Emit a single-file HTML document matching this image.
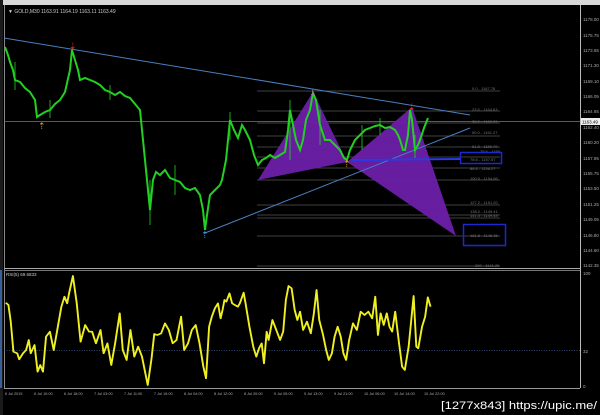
<!DOCTYPE html>
<html><head><meta charset="utf-8"><style>
html,body{margin:0;padding:0;background:#000;width:600px;height:415px;overflow:hidden}
svg{display:block}
text{font-family:"Liberation Sans",sans-serif}
</style></head><body>
<svg width="600" height="415" viewBox="0 0 600 415" xmlns="http://www.w3.org/2000/svg">
<rect width="600" height="415" fill="#000"/>
<rect x="0" y="0" width="600" height="5" fill="#d8d8d8"/>
<rect x="0" y="0" width="3" height="415" fill="#1a1a1a"/>
<rect x="0" y="270" width="2" height="118" fill="#3a5f9a"/>
<line x1="4.5" y1="5" x2="4.5" y2="388" stroke="#888" stroke-width="1"/>
<line x1="580.5" y1="5" x2="580.5" y2="388" stroke="#bbb" stroke-width="1"/>
<line x1="4" y1="268.5" x2="580" y2="268.5" stroke="#aaa" stroke-width="1"/>
<line x1="4" y1="270.5" x2="580" y2="270.5" stroke="#777" stroke-width="1"/>
<line x1="4" y1="388.5" x2="580" y2="388.5" stroke="#999" stroke-width="1"/>
<text x="8" y="13" fill="#ccc" font-size="5">▼ GOLD,M30  1163.91 1164.19 1163.11 1163.49</text>
<g stroke="#555" stroke-width="0.7">
<line x1="257" y1="91" x2="500" y2="91"/><line x1="257" y1="111" x2="500" y2="111"/>
<line x1="257" y1="123" x2="500" y2="123"/><line x1="257" y1="136" x2="500" y2="136"/>
<line x1="257" y1="147" x2="500" y2="147"/><line x1="257" y1="157" x2="500" y2="157"/>
<line x1="257" y1="168" x2="500" y2="168"/><line x1="257" y1="180" x2="500" y2="180"/>
<line x1="257" y1="205" x2="500" y2="205"/><line x1="257" y1="215" x2="500" y2="215"/>
<line x1="257" y1="218" x2="500" y2="218"/><line x1="257" y1="236" x2="500" y2="236"/>
<line x1="257" y1="266" x2="500" y2="266"/>
</g>
<g fill="#777" font-size="4">
<text x="472" y="90">0.0 - 1167.76</text><text x="472" y="111">23.6 - 1164.63</text>
<text x="472" y="123">38.2 - 1162.29</text><text x="472" y="134">50.0 - 1161.27</text>
<text x="472" y="148">61.8 - 1159.79</text><text x="480" y="153">78.6 - 1159</text>
<text x="470" y="161">78.6 - 1157.57</text><text x="470" y="170">88.6 - 1156.27</text>
<text x="470" y="180">100.0 - 1154.86</text><text x="470" y="204">127.2 - 1151.20</text>
<text x="470" y="213">138.2 - 1149.41</text><text x="470" y="217">141.4 - 1149.44</text>
<text x="470" y="237">161.8 - 1146.36</text><text x="475" y="267">200 - 1141.20</text>
</g>
<line x1="4" y1="121.5" x2="580" y2="121.5" stroke="#777" stroke-width="0.8"/>
<polygon points="258,180 313,92 347,162" fill="#6b1fa8" opacity="0.95"/>
<polygon points="347,162 412,107 456,236" fill="#6b1fa8" opacity="0.95"/>
<line x1="4" y1="38" x2="470" y2="115" stroke="#4a7fc0" stroke-width="1"/>
<line x1="205" y1="233" x2="470" y2="128" stroke="#4a7fc0" stroke-width="1"/>
<polyline fill="none" stroke="#22d022" stroke-width="2" points="5,47 8,55 10,62 13,70 15,80 20,82 25,88 30,92 35,100 37,117 40,115 45,112 50,110 55,104 60,100 65,92 70,70 72,50 75,60 78,70 80,80 85,78 90,80 95,82 100,85 105,90 110,92 115,95 120,92 125,96 130,98 135,104 140,110 142,130 145,160 148,190 150,210 153,180 156,172 160,175 165,170 170,178 175,180 180,182 185,188 190,190 195,188 200,195 203,210 205,230 207,215 210,195 215,190 220,185 222,180 226,160 228,140 230,120 234,130 238,138 242,125 245,130 250,140 254,155 258,165 262,160 266,158 270,155 275,158 280,155 285,152 288,130 290,110 293,125 296,140 300,150 303,140 306,120 310,110 313,93 316,100 320,125 325,140 330,140 335,145 340,150 344,158 347,160 350,150 355,140 360,135 365,130 370,128 375,126 380,125 385,128 390,127 395,130 398,135 400,140 403,150 405,150 408,135 410,110 412,120 415,150 418,145 420,140 424,128 428,118"/>
<g stroke="#22d022" stroke-width="0.8">
<line x1="15" y1="62" x2="15" y2="90"/><line x1="50" y1="100" x2="50" y2="118"/><line x1="110" y1="85" x2="110" y2="100"/>
<line x1="150" y1="180" x2="150" y2="225"/><line x1="175" y1="165" x2="175" y2="195"/><line x1="230" y1="112" x2="230" y2="140"/>
<line x1="290" y1="100" x2="290" y2="160"/><line x1="320" y1="110" x2="320" y2="145"/><line x1="362" y1="125" x2="362" y2="150"/>
<line x1="380" y1="118" x2="380" y2="135"/><line x1="415" y1="135" x2="415" y2="158"/>
</g>
<text x="69" y="49" fill="#e03030" font-size="9">⇣</text>
<text x="38" y="129" fill="#e0a020" font-size="9">⇡</text>
<text x="201" y="238" fill="#40a0ff" font-size="9">⇡</text>
<text x="309" y="96" fill="#d060d0" font-size="9">⇣</text>
<text x="408" y="110" fill="#e03030" font-size="9">⇣</text>
<text x="343" y="167" fill="#e0a020" font-size="9">⇡</text>
<rect x="460.5" y="152.5" width="41" height="11" fill="none" stroke="#1a2ad0" stroke-width="1.5"/>
<rect x="463.5" y="224.5" width="42" height="21" fill="none" stroke="#1a2ad0" stroke-width="1.5"/>
<line x1="352" y1="160" x2="460" y2="159" stroke="#2a3ae0" stroke-width="2"/>
<g fill="#aaa" font-size="4.5">
<text x="583" y="21">1178.00</text><text x="583" y="37">1175.75</text><text x="583" y="52">1173.55</text>
<text x="583" y="67">1171.30</text><text x="583" y="83">1169.10</text><text x="583" y="98">1166.05</text>
<text x="583" y="113">1164.65</text><text x="583" y="129">1162.40</text><text x="583" y="144">1160.20</text>
<text x="583" y="160">1157.95</text><text x="583" y="175">1155.75</text><text x="583" y="190">1153.50</text>
<text x="583" y="206">1151.25</text><text x="583" y="221">1149.05</text><text x="583" y="237">1146.80</text>
<text x="583" y="252">1144.60</text><text x="583" y="267">1142.35</text>
<text x="583" y="275">100</text><text x="583" y="353">32</text><text x="583" y="388">0</text>
</g>
<rect x="581" y="118" width="19" height="7" fill="#eee"/>
<text x="582" y="123.5" fill="#000" font-size="4.5">1163.49</text>
<text x="6" y="276" fill="#ccc" font-size="4.5">RSI(5) 69.6833</text>
<line x1="4" y1="350.7" x2="580" y2="350.7" stroke="#4a6ab0" stroke-width="0.7" stroke-dasharray="1,1.5"/>
<g transform="translate(0,260) scale(0.3837,0.33333)">
<polyline fill="none" stroke="#f0f020" stroke-width="5" stroke-linejoin="round" points="15,128 22,135 28,185 35,275 45,280 50,298 60,280 68,270 75,240 80,280 90,255 98,335 105,315 112,335 120,230 130,215 140,270 150,205 160,140 168,110 175,130 180,100 190,48 200,130 210,245 222,195 232,215 240,215 250,250 262,210 270,280 280,250 290,315 300,250 312,160 320,270 330,300 340,210 350,290 360,260 370,290 385,375 395,295 402,222 410,225 420,220 430,190 440,210 450,250 460,240 472,170 480,270 490,250 500,210 510,195 520,250 530,320 537,355 545,200 552,170 560,145 568,130 575,175 580,150 585,120 590,125 598,100 605,130 612,135 620,140 625,130 635,98 640,130 650,200 660,260 668,290 675,265 682,250 688,310 695,215 700,240 710,180 720,210 730,240 738,215 745,120 752,78 760,85 768,150 775,180 782,155 790,210 800,185 810,220 818,160 825,90 832,180 842,225 850,270 857,300 865,280 872,230 880,200 888,230 895,280 902,300 910,240 920,190 930,210 940,155 950,165 960,155 970,175 978,110 985,225 992,160 1000,195 1008,160 1015,200 1022,215 1030,155 1040,250 1048,320 1055,330 1065,260 1078,108 1085,260 1090,265 1100,200 1108,170 1115,112 1122,140"/>
</g>
<g fill="#aaa" font-size="3.8">
<text x="5" y="395">6 Jul 2015</text><text x="34" y="395">6 Jul 10:00</text><text x="64" y="395">6 Jul 18:00</text>
<text x="94" y="395">7 Jul 03:00</text><text x="124" y="395">7 Jul 11:00</text><text x="154" y="395">7 Jul 19:00</text>
<text x="184" y="395">8 Jul 04:00</text><text x="214" y="395">8 Jul 12:00</text><text x="244" y="395">8 Jul 20:00</text>
<text x="274" y="395">9 Jul 05:00</text><text x="304" y="395">9 Jul 13:00</text><text x="334" y="395">9 Jul 21:00</text>
<text x="364" y="395">10 Jul 06:00</text><text x="394" y="395">10 Jul 14:00</text><text x="424" y="395">10 Jul 22:00</text>
</g>
<text x="597" y="409" fill="#fff" font-size="11" text-anchor="end" textLength="156" lengthAdjust="spacingAndGlyphs">[1277x843] https://upic.me/</text>
</svg>
</body></html>
